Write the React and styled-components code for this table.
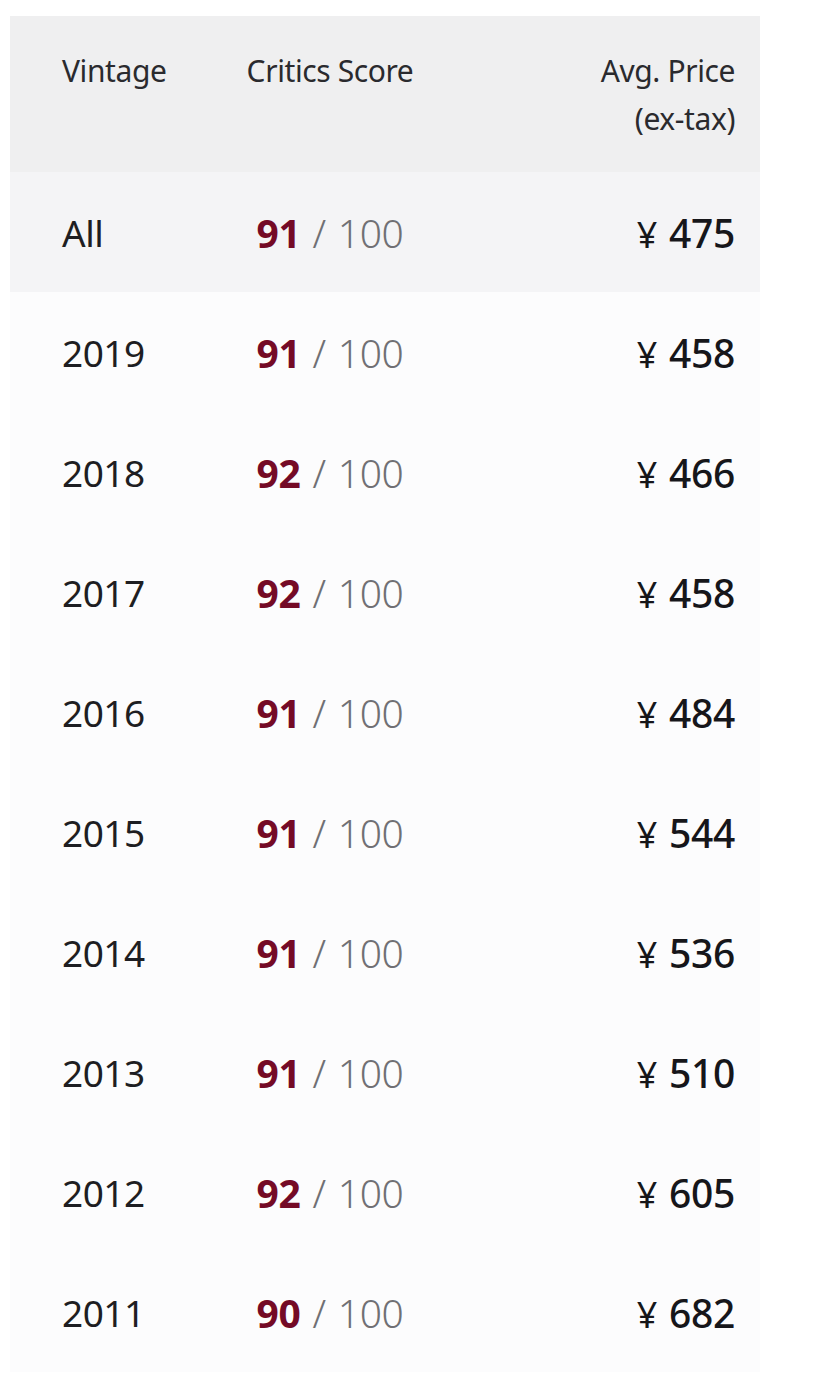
import React from "react";
import styled, { createGlobalStyle } from "styled-components";

const Global = createGlobalStyle`
  html, body { margin: 0; padding: 0; background: #ffffff; }
  body { font-family: "Noto Sans", "Open Sans", sans-serif; }
`;

const Page = styled.div`
  padding: 16px 0 0 10px;
  min-height: 1380px;
  box-sizing: border-box;
  background: #ffffff;
`;

const Table = styled.div`
  width: 750px;
  display: flex;
  flex-direction: column;
  background: #fcfcfd;
`;

const Row = styled.div`
  display: grid;
  grid-template-columns: 182px 172px 1fr;
  align-items: ${(p) => (p.$head ? "start" : "center")};
  height: ${(p) => (p.$head ? "156px" : "120px")};
  box-sizing: border-box;
  padding: ${(p) => (p.$head ? "31px 25px 0 52px" : "0 25px 0 52px")};
  background: ${(p) => p.$bg || "transparent"};
`;

const Head = styled.div`
  font-size: 30px;
  line-height: 48px;
  color: #2a2a2e;
  font-weight: 400;
  text-align: ${(p) => p.$align || "left"};
  letter-spacing: -0.4px;
  white-space: nowrap;
  display: flex;
  flex-direction: column;
  align-items: ${(p) =>
    p.$align === "center" ? "center" : p.$align === "right" ? "flex-end" : "flex-start"};
`;

const Year = styled.div`
  font-size: 37px;
  color: #1e1e22;
  font-weight: 400;
  letter-spacing: -0.5px;
`;

const Score = styled.div`
  display: flex;
  justify-content: center;
  align-items: baseline;
  font-size: 39px;
  letter-spacing: -0.3px;
  white-space: nowrap;
`;

const Points = styled.span`
  color: #740a26;
  font-weight: 700;
`;

const Slash = styled.span`
  color: #707074;
  font-weight: 300;
  margin: 0 12px 0 12px;
`;

const Of = styled.span`
  color: #707074;
  font-weight: 300;
`;

const Price = styled.div`
  display: flex;
  justify-content: flex-end;
  align-items: baseline;
  gap: 12px;
  font-size: 39px;
  color: #16161a;
  font-weight: 500;
  letter-spacing: -0.3px;
  white-space: nowrap;
`;

const Yen = styled.span`
  font-weight: 400;
  font-size: 36px;
`;

const rows = [
  ["All", 91, 475],
  ["2019", 91, 458],
  ["2018", 92, 466],
  ["2017", 92, 458],
  ["2016", 91, 484],
  ["2015", 91, 544],
  ["2014", 91, 536],
  ["2013", 91, 510],
  ["2012", 92, 605],
  ["2011", 90, 682],
];

export default function App() {
  return (
    <Page>
      <Global />
      <Table>
        <Row $head $bg="#efeff0">
          <Head>Vintage</Head>
          <Head $align="center">Critics Score</Head>
          <Head $align="right">
            <span>Avg. Price</span>
            <span>(ex-tax)</span>
          </Head>
        </Row>
        {rows.map(([year, score, price], i) => (
          <Row key={year} $bg={i === 0 ? "#f4f4f6" : undefined}>
            <Year>{year}</Year>
            <Score>
              <Points>{score}</Points>
              <Slash>/</Slash>
              <Of>100</Of>
            </Score>
            <Price>
              <Yen>¥</Yen>
              <span>{price}</span>
            </Price>
          </Row>
        ))}
      </Table>
    </Page>
  );
}
